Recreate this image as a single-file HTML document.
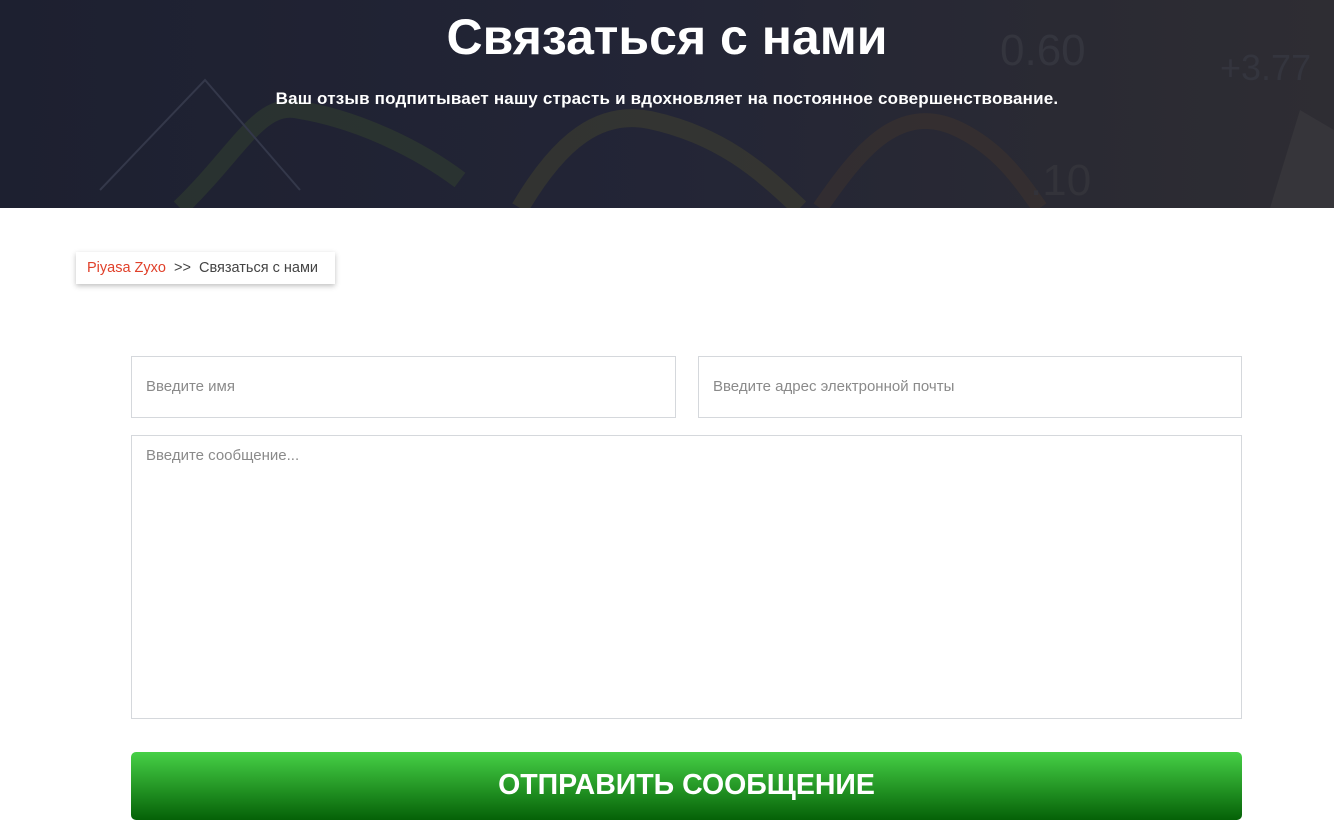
<!DOCTYPE html>
<html><head><meta charset="utf-8"><style>
*{box-sizing:border-box;margin:0;padding:0}
body{width:1334px;height:835px;overflow:hidden;background:#fff;font-family:"Liberation Sans",sans-serif;position:relative}
.hero{position:absolute;left:0;top:0;width:1334px;height:208px;background:linear-gradient(90deg,#1d2030 0%,#232536 50%,#2a2a33 80%,#2e2d33 100%);overflow:hidden}
.hero h1{position:absolute;top:8px;width:100%;text-align:center;color:#fff;font-size:50px;font-weight:bold}
.hero p{position:absolute;top:89px;width:100%;text-align:center;color:#fff;font-size:17px;font-weight:bold;letter-spacing:.2px}
.bc{position:absolute;left:76px;top:252px;width:259px;height:32px;background:#fff;box-shadow:0 2px 5px rgba(0,0,0,.25);font-size:14.5px;line-height:32px;padding-left:11px;color:#444;white-space:nowrap}
.bc span{color:#e0402a}
.in{position:absolute;border:1px solid #d5d8dc;background:#fff;color:#8a8a8a;font-size:15px;padding-left:14px}
.btn{position:absolute;left:131px;top:752px;width:1111px;height:68px;border-radius:5px;background:linear-gradient(#46d046,#056107);color:#fff;font-size:28.5px;font-weight:bold;text-align:center;line-height:66px}
</style></head><body>
<div class="hero">
<svg width="1334" height="208" style="position:absolute;left:0;top:0">
<path d="M180 208 C240 150 260 100 300 110 C360 120 420 150 460 180" stroke="#3a4a2e" stroke-width="18" fill="none" opacity=".4"/>
<path d="M520 208 C560 140 600 110 650 120 C720 135 760 170 800 208" stroke="#4a4a2c" stroke-width="18" fill="none" opacity=".4"/>
<path d="M820 208 C860 150 900 100 960 130 C1000 150 1020 180 1040 208" stroke="#4a3a2c" stroke-width="16" fill="none" opacity=".35"/>
<path d="M100 190 L205 80 L300 190" stroke="#34384a" stroke-width="2" fill="none"/>
<text x="1000" y="65" font-size="44" fill="#34353e" font-family="Liberation Sans">0.60</text>
<text x="1220" y="80" font-size="36" fill="#34353e" font-family="Liberation Sans">+3.77</text>
<text x="1030" y="195" font-size="44" fill="#33333a" font-family="Liberation Sans">.10</text>
<path d="M1270 208 L1300 110 L1334 130 L1334 208Z" fill="#36353a"/>
</svg>
<h1>Связаться с нами</h1>
<p>Ваш отзыв подпитывает нашу страсть и вдохновляет на постоянное совершенствование.</p>
</div>
<div class="bc"><span>Piyasa Zyxo</span>&nbsp;&nbsp;&gt;&gt;&nbsp;&nbsp;Связаться с нами</div>
<div class="in" style="left:131px;top:356px;width:545px;height:62px;line-height:60px">Введите имя</div>
<div class="in" style="left:698px;top:356px;width:544px;height:62px;line-height:60px">Введите адрес электронной почты</div>
<div class="in" style="left:131px;top:435px;width:1111px;height:284px;padding-top:11px">Введите сообщение...</div>
<div class="btn">ОТПРАВИТЬ СООБЩЕНИЕ</div>
</body></html>
